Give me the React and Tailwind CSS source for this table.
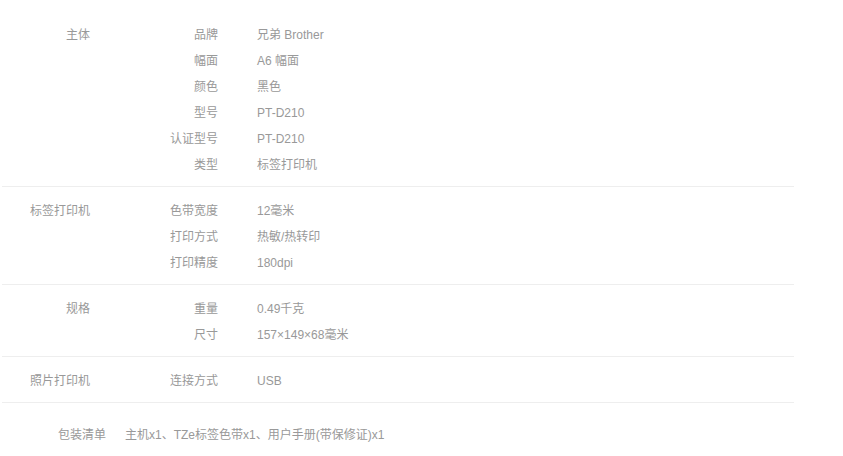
const sections = [
  {
    title: "主体",
    rows: [
      ["品牌", "兄弟 Brother"],
      ["幅面", "A6 幅面"],
      ["颜色", "黑色"],
      ["型号", "PT-D210"],
      ["认证型号", "PT-D210"],
      ["类型", "标签打印机"],
    ],
  },
  {
    title: "标签打印机",
    rows: [
      ["色带宽度", "12毫米"],
      ["打印方式", "热敏/热转印"],
      ["打印精度", "180dpi"],
    ],
  },
  {
    title: "规格",
    rows: [
      ["重量", "0.49千克"],
      ["尺寸", "157×149×68毫米"],
    ],
  },
  {
    title: "照片打印机",
    rows: [["连接方式", "USB"]],
  },
];

export default function App() {
  return (
    <div
      className="w-[843px] h-[456px] bg-white text-[12px] text-[#999] overflow-hidden"
      style={{ fontFamily: '"Liberation Sans", "Noto Sans CJK SC", sans-serif' }}
    >
      <div className="ml-[2px] w-[792px] pt-[11px]">
        {sections.map((s) => (
          <div key={s.title} className="flex pt-[11px] pb-[8px] border-b border-[#eee]">
            <div className="w-[88px] text-right leading-[26px]">{s.title}</div>
            <div className="flex flex-col">
              {s.rows.map(([k, v]) => (
                <div key={k} className="flex leading-[26px]">
                  <div className="w-[128px] text-right">{k}</div>
                  <div className="ml-[39px]">{v}</div>
                </div>
              ))}
            </div>
          </div>
        ))}
        <div className="flex pt-[23px] leading-[18px]">
          <div className="ml-[56px]">包装清单</div>
          <div className="ml-[19px]">主机x1、TZe标签色带x1、用户手册(带保修证)x1</div>
        </div>
      </div>
    </div>
  );
}
